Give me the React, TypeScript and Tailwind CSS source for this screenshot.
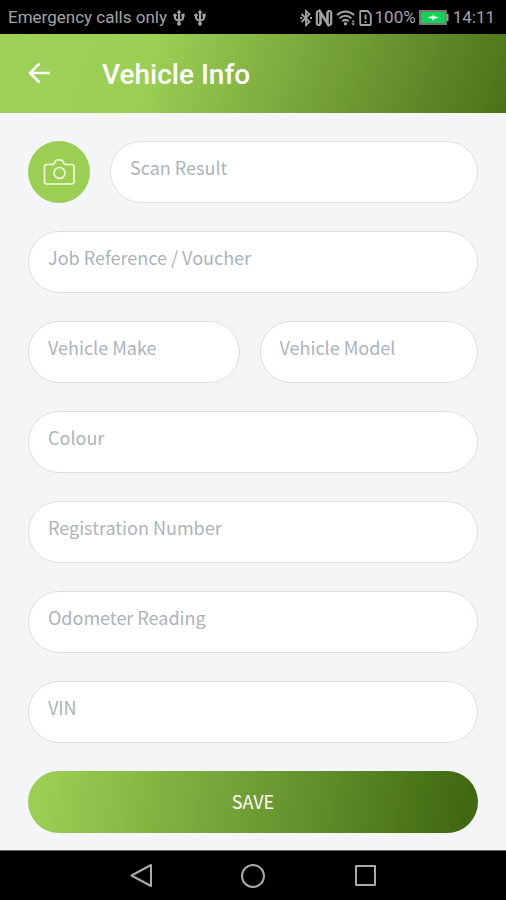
import { useState } from "react";
import { clsx } from "clsx";

type FieldProps = {
  name: string;
  label: string;
  className?: string;
};

const Field = ({ name, label, className }: FieldProps) => {
  const [value, setValue] = useState("");

  return (
    <input
      type="text"
      name={name}
      aria-label={label}
      placeholder={label}
      value={value}
      onChange={(e) => setValue(e.target.value)}
      className={clsx(
        "h-[62px] min-w-0 rounded-full border border-[#dcdfe0] bg-white px-[19px] pb-2.5 text-[18px] text-gray-700 outline-none placeholder:text-[#a9b5bb] focus:border-[#9bcf53]",
        className ?? "w-full"
      )}
    />
  );
};

const UsbIcon = () => (
  <svg viewBox="0 0 12 18" className="h-[18px] w-3" fill="none" stroke="currentColor" strokeWidth="2">
    <path d="M6 2.500v12M2 6.500v2.200Q2 11 6 11.500Q10 11 10 8.700V6.500" />
    <path d="M6 0.500L8.300 4H3.700Z" fill="currentColor" stroke="none" />
    <circle cx="6" cy="14.800" r="2" fill="currentColor" stroke="none" />
    <circle cx="2" cy="6.300" r="1.800" fill="currentColor" stroke="none" />
    <path d="M8.400 4.700h3.200v3.200H8.400z" fill="currentColor" stroke="none" />
  </svg>
);

const BluetoothIcon = () => (
  <svg viewBox="0 0 12 18" className="h-[18px] w-3" fill="none" stroke="currentColor" strokeWidth="1.800">
    <path d="M1.500 5l8 7.800L6 16V2l3.500 3.200L1.500 13" />
    <path d="M0.200 9h2M10 9h2" />
  </svg>
);

const NfcIcon = () => (
  <svg viewBox="0 0 18 18" className="h-[18px] w-[18px]" fill="none" stroke="currentColor">
    <path d="M5.500 2H4Q1.800 2 1.800 4.200v9.600Q1.800 16 4 16h1.500M12.500 2H14q2.200 0 2.200 2.200v9.600Q16.200 16 14 16h-1.500" strokeWidth="2.200" />
    <path d="M5.500 15.500V3.500l7 11V2.500" strokeWidth="2.600" />
  </svg>
);

const WifiIcon = () => (
  <svg viewBox="0 0 20 18" className="h-[18px] w-5" fill="none" stroke="currentColor" strokeWidth="2">
    <path d="M1 6q8.500-7 17 0M3.600 9.200q5.900-4.800 11.800 0M6.200 12.200q3.300-2.600 6.600 0" />
    <circle cx="9.500" cy="14.800" r="1.700" fill="currentColor" stroke="none" />
    <path d="M15.300 13.200l1.800-2.200 1.800 2.200zM15.300 14.300l1.800 2.200 1.800-2.200z" fill="currentColor" stroke="none" />
  </svg>
);

const SimAlertIcon = () => (
  <svg viewBox="0 0 13 18" className="h-[18px] w-[13px]" fill="none" stroke="currentColor" strokeWidth="1.800">
    <path d="M1.200 3v12q0 1 1 1h8.600q1 0 1-1V5.500L8.500 2H2.200q-1 0-1 1z" />
    <path d="M6.500 5.500v5M6.500 12v2" />
  </svg>
);

const BatteryIcon = () => (
  <svg viewBox="0 0 30 18" className="h-[18px] w-[30px]">
    <rect x="1" y="2" width="26" height="13" fill="#12d255" stroke="#777" strokeWidth="2" />
    <path d="M27.500 5h2v7h-2z" fill="#a0a0a0" />
    <path d="M8.500 8.500l5-1.500.7-2 1.300 2.200 4.500 1.300-5 1.500-.8 2.200-1.200-2.400z" fill="#e8fff0" />
  </svg>
);

const StatusBar = () => (
  <div className="flex h-[34px] items-center justify-between bg-black pt-0.5 pr-[11px] pl-2 font-[Roboto,sans-serif] text-[17px] text-[#a3a3a3]">
    <div className="flex items-center">
      <span>Emergency calls only</span>
      <div className="ml-1.5 flex gap-[9px]">
        <UsbIcon />
        <UsbIcon />
      </div>
    </div>
    <div className="flex items-center">
      <div className="flex items-center gap-[3px]">
        <BluetoothIcon />
        <NfcIcon />
        <WifiIcon />
        <SimAlertIcon />
        <span>100%</span>
      </div>
      <div className="ml-[3px] flex items-center gap-1">
        <BatteryIcon />
        <span>14:11</span>
      </div>
    </div>
  </div>
);

const Header = () => (
  <header className="flex h-[79px] items-center bg-[linear-gradient(110deg,#9fd158_0%,#9bcf54_30%,#84b343_50%,#4b7219_100%)] pl-7 text-white">
    <button type="button" aria-label="Back">
      <svg viewBox="0 0 22 22" className="size-[22px]" fill="none" stroke="currentColor" strokeWidth="2.500">
        <path d="M22 10H2M11.500 0.500L2 10l9.500 9.500" />
      </svg>
    </button>
    <h1 className="ml-[52px] pt-0.5 font-[Roboto,sans-serif] text-[28px] font-medium">Vehicle Info</h1>
  </header>
);

const NavBar = () => (
  <nav className="flex h-[50px] items-center justify-center gap-[88px] border-t border-[#666] bg-black text-[#a9a9a9]">
    <button type="button" aria-label="Back">
      <svg viewBox="0 0 24 24" className="size-6" fill="none" stroke="currentColor" strokeWidth="2" strokeLinejoin="round">
        <path d="M22 1v21L2.500 11.500z" />
      </svg>
    </button>
    <button type="button" aria-label="Home">
      <svg viewBox="0 0 24 24" className="size-6" fill="none" stroke="currentColor" strokeWidth="2">
        <circle cx="12" cy="12" r="11" />
      </svg>
    </button>
    <button type="button" aria-label="Recent apps">
      <svg viewBox="0 0 24 24" className="size-6" fill="none" stroke="currentColor" strokeWidth="2" strokeLinejoin="round">
        <rect x="3" y="2" width="19" height="19" />
      </svg>
    </button>
  </nav>
);

export default function App() {
  return (
    <div className="flex min-h-screen flex-col bg-[#f3f5f7] font-['Noto_Sans_CJK_SC','Noto_Sans',sans-serif]">
      <StatusBar />
      <Header />

      <form
        className="flex flex-1 flex-col gap-7 px-7 pt-7 pb-4"
        onSubmit={(e) => e.preventDefault()}
      >
        <div className="flex gap-5">
          <button
            type="button"
            aria-label="Scan"
            className="flex size-[62px] shrink-0 items-center justify-center rounded-full bg-[#9bcf53] text-[#f4ffe0]"
          >
            <svg viewBox="0 0 32 28" className="h-7 w-8" fill="none" stroke="currentColor" strokeWidth="1.600" strokeLinejoin="round">
              <path d="M3.500 6.500h6q1.300 0 2-1.600l.7-1.600q.6-1.300 1.800-1.300h4q1.200 0 1.800 1.300l.7 1.600q.7 1.600 2 1.600H29q2 0 2 2V24q0 2-2 2H3.500q-2 0-2-2V8.500q0-2 2-2z" />
              <circle cx="16.500" cy="15" r="5.500" />
            </svg>
          </button>
          <Field name="scan" label="Scan Result" className="flex-1" />
        </div>

        <Field name="reference" label="Job Reference / Voucher" />

        <div className="flex gap-5">
          <Field name="make" label="Vehicle Make" className="w-[47%]" />
          <Field name="model" label="Vehicle Model" className="flex-1" />
        </div>

        <Field name="colour" label="Colour" />
        <Field name="registration" label="Registration Number" />
        <Field name="odometer" label="Odometer Reading" />
        <Field name="vin" label="VIN" />

        <button
          type="submit"
          className="h-[62px] rounded-full bg-[linear-gradient(100deg,#9bcf53_3%,#6d9b33_52%,#3f6810_97%)] pb-0.5 text-[18px] text-white"
        >
          SAVE
        </button>
      </form>

      <NavBar />
    </div>
  );
}
